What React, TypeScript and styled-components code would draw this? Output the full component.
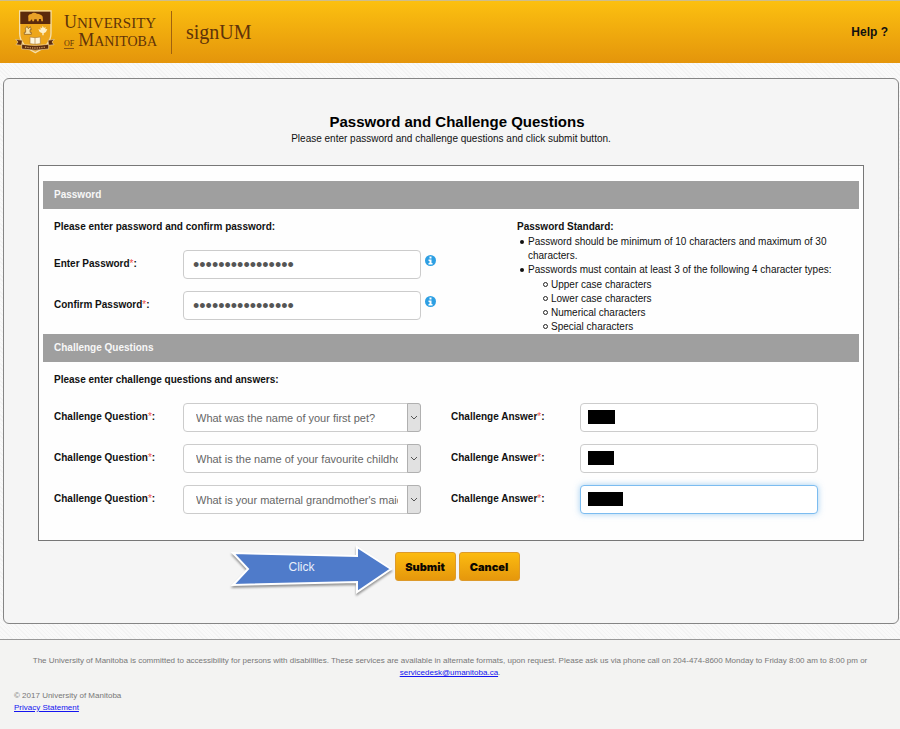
import React from "react";
import styled, { createGlobalStyle } from "styled-components";

const GlobalStyle = createGlobalStyle`
  *, *::before, *::after { box-sizing: border-box; }
  html { height: 100%; background: #f3f3f2; }
  body {
    margin: 0;
    font-family: "Liberation Sans", Arial, sans-serif;
    font-size: 10px;
    line-height: 14px;
    color: #111;
  }
  #root { min-height: 100vh; }
`;

const Page = styled.div`
  display: flex;
  flex-direction: column;
  min-height: 100vh;
  background: #f7f7f7 repeating-linear-gradient(45deg, #f3f3f3 0 1px, #f9f9f9 1px 3px);
`;

const Header = styled.header`
  display: flex;
  align-items: center;
  height: 63px;
  padding: 0 12px 0 15px;
  border-top: 1px solid #cdbd8c;
  background: linear-gradient(#fcc010, #e4950b);
  color: #5f3309;
  font-family: "Liberation Serif", "Times New Roman", serif;
`;

const Brand = styled.div`
  display: flex;
  align-items: center;
  flex: 1;
`;

const Wordmark = styled.div`
  display: flex;
  flex-direction: column;
  margin-left: 9px;
  font-size: 15px;
  line-height: 17px;
  white-space: nowrap;
`;

const WordLine = styled.div`
  display: flex;
  align-items: baseline;
`;

const Initial = styled.span`
  font-size: 18px;
`;

const SmallWord = styled.span`
  font-size: 14px;
`;

const OfWord = styled.span`
  margin-right: 4px;
  border-bottom: 1px solid #8a5512;
  font-size: 8px;
  line-height: 8px;
`;

const AppName = styled.div`
  display: flex;
  align-items: center;
  height: 43px;
  margin-left: 14px;
  padding-left: 14px;
  border-left: 1px solid #a0620f;
  font-size: 20px;
`;

const HelpLink = styled.a`
  color: #111;
  font-family: "Liberation Sans", Arial, sans-serif;
  font-size: 12px;
  font-weight: bold;
  text-decoration: none;
`;

const Card = styled.main`
  flex: 1;
  margin: 15px 1px 15px 3px;
  padding: 33px 34px;
  border: 1px solid #858585;
  border-radius: 6px;
  background: #f5f5f5;
`;

const Title = styled.h1`
  margin: 0;
  padding-left: 12px;
  font-size: 15px;
  line-height: 20px;
  text-align: center;
  color: #000;
`;

const Subtitle = styled.p`
  margin: 0 0 19px;
  text-align: center;
`;

const FormBox = styled.div`
  padding: 15px 4px 26px;
  border: 1px solid #777;
  background: #fefefe;
`;

const SectionBar = styled.h2`
  margin: 0;
  padding: 0 11px;
  background: #9f9f9f;
  color: #f7f7f7;
  font-size: 10px;
  line-height: 28px;
`;

const Prompt = styled.p`
  margin: 0 0 16px;
  font-weight: bold;
`;

const PasswordSection = styled.div`
  display: grid;
  grid-template-columns: 463fr 342fr;
  padding: 11px 0 0 11px;
`;

const Rows = styled.div`
  display: flex;
  flex-direction: column;
  gap: 12px;
`;

const PasswordRow = styled.div`
  display: grid;
  grid-template-columns: 129fr 238fr 96fr;
  align-items: center;
`;

const ChallengeSection = styled.div`
  padding: 11px 0 0 11px;
`;

const ChallengeRow = styled.div`
  display: grid;
  grid-template-columns: 129fr 238fr 30fr 129fr 238fr 41fr;
  align-items: center;
`;

const Label = styled.label<{ $column?: number }>`
  grid-column: ${(p) => p.$column ?? 1};
  padding-bottom: 2px;
  font-weight: bold;
  white-space: nowrap;
`;

const Star = styled.span`
  color: #f0504a;
  font-weight: normal;
`;

const TextBox = styled.input`
  display: block;
  width: 100%;
  min-width: 0;
  height: 29px;
  padding: 0 9px;
  border: 1px solid #ccc;
  border-radius: 4px;
  background: #fff;
  color: #555;
  font-family: "Liberation Sans", Arial, sans-serif;
  font-size: 12px;
  outline: none;
`;

const PasswordBox = styled(TextBox)`
  padding-top: 2px;
  font-size: 18px;
`;

const AnswerBox = styled(TextBox)<{ $active?: boolean }>`
  border-color: ${(p) => (p.$active ? "#7cbcf0" : "#ccc")};
  box-shadow: ${(p) => (p.$active ? "0 0 6px rgba(102, 175, 233, 0.6)" : "none")};
`;

const AnswerCell = styled.div`
  position: relative;
  grid-column: 5;
`;

const Redaction = styled.span<{ $width: number }>`
  position: absolute;
  top: 7px;
  left: 8px;
  width: ${(p) => p.$width}px;
  height: 14px;
  background: #000;
`;

const SelectBox = styled.div`
  display: grid;
  position: relative;
`;

const Select = styled.select`
  width: 100%;
  min-width: 0;
  height: 29px;
  padding: 0 22px 0 12px;
  border: 1px solid #ccc;
  border-radius: 4px;
  background: #fff;
  color: #666;
  font-family: "Liberation Sans", Arial, sans-serif;
  font-size: 11px;
  appearance: none;
`;

const SelectArrow = styled.span`
  position: absolute;
  top: 0;
  right: 0;
  bottom: 0;
  display: flex;
  align-items: center;
  justify-content: center;
  width: 14px;
  border: 1px solid #b0b0b0;
  border-radius: 0 3px 3px 0;
  background: #e1e1e1;
  pointer-events: none;
`;

const InfoButton = styled.button`
  align-self: start;
  justify-self: start;
  display: flex;
  margin: 5px 0 0 4px;
  padding: 0;
  border: 0;
  background: none;
`;

const StandardTitle = styled.div`
  margin-bottom: 1px;
  font-weight: bold;
`;

const BulletList = styled.ul`
  margin: 0;
  padding-left: 11px;
  list-style: none;

  > li::before {
    content: "";
    display: inline-block;
    width: 4px;
    height: 4px;
    margin: 0 4px 1px -8px;
    border-radius: 50%;
    background: #111;
    vertical-align: middle;
  }
`;

const CircleList = styled(BulletList)`
  margin-top: 1px;
  padding-left: 23px;

  > li::before {
    width: 5px;
    height: 5px;
    margin: 0 3px 1px -8px;
    border: 1px solid #222;
    background: none;
  }
`;

const Actions = styled.div`
  display: flex;
  justify-content: center;
  padding: 11px 0 0 12px;
`;

const ButtonGroup = styled.div`
  position: relative;
  display: flex;
  gap: 3px;
`;

const ActionButton = styled.button`
  width: 61px;
  height: 29px;
  padding: 0;
  border: 1px solid #dd9a2b;
  border-radius: 3px;
  background: linear-gradient(#fcbb10, #e5970c);
  color: #0c0700;
  font-family: Inter, "Liberation Sans", sans-serif;
  font-size: 11px;
  font-weight: 900;
`;

const Callout = styled.div`
  position: absolute;
  right: 100%;
  top: -8px;
  width: 167px;
  height: 52px;
`;

const CalloutArrow = styled.svg`
  filter: drop-shadow(0 2px 1px rgba(0, 0, 0, 0.4));
`;

const CalloutText = styled.span`
  position: absolute;
  top: 16px;
  left: 61px;
  color: #e9effb;
  font-size: 12px;
`;

const Footer = styled.footer`
  padding: 15px 14px 15px;
  border-top: 1px solid #999;
  background: #f3f3f2;
  color: #777;
  font-size: 8px;
  line-height: 12px;
`;

const FooterNote = styled.p`
  margin: 0 0 11px;
  text-align: center;
`;

const FooterLink = styled.a`
  color: #1414f0;
`;

function Crest() {
  return (
    <svg width="40" height="44" viewBox="0 0 120 132" aria-hidden="true">
      <path d="M14 3H108V70C108 100 86 116 61 128C36 116 14 100 14 70Z" fill="#eda61a" stroke="#f5dfac" strokeWidth="4" />
      <path d="M16 5H106V42H16Z" fill="#5b2a0c" />
      <path
        d="M40 34V24C38 17 42 12 49 12C53 7 61 7 66 11C74 12 81 14 83 20L84 34H79L78 27H72L71 34H66L65 28H58L57 34H52L51 28L47 31L46 34Z"
        fill="#e9a127"
      />
      <path d="M30 57l6-8 4 7 6-6 3 9h-4v8h4v6H28v-6h4v-8z" fill="#f9e2a4" stroke="#80511a" strokeWidth="2" />
      <path d="M83 47l4 7 5-3-1 7 6-1-4 9-7 4v6h-4v-6l-8-4-4-8 7 1-1-7 5 3z" fill="#fdf0c8" />
      <path d="M45 81l15 2 16-2v20l-16 2-15-2z" fill="#fff6dc" stroke="#b28139" strokeWidth="2" />
      <path d="M60 83V103" stroke="#b28139" strokeWidth="2" />
      <path d="M2 88L22 91 20 106 3 104 9 96ZM118 88L99 91 101 106 117 104 111 96Z" fill="#5b2a0c" stroke="#f1d295" strokeWidth="2" />
      <path d="M20 103Q61 110 101 103V117Q61 124 20 117Z" fill="#5b2a0c" stroke="#f1d295" strokeWidth="2" />
      <path d="M30 111Q61 117 92 111" fill="none" stroke="#c99a5c" strokeWidth="4" strokeDasharray="4 3" />
    </svg>
  );
}

function InfoIcon() {
  return (
    <svg width="11" height="11" viewBox="0 0 22 22" aria-hidden="true">
      <circle cx="11" cy="11" r="11" fill="#2d9fe3" />
      <path d="M9 3h4v4H9zM7 9h6v7h2v3H7v-3h2v-4H7z" fill="#fff" />
    </svg>
  );
}

function PasswordField({ id, label }: { id: string; label: string }) {
  return (
    <PasswordRow>
      <Label htmlFor={id}>{label}<Star>*</Star>:</Label>
      <PasswordBox id={id} type="password" defaultValue="abcdefgh12345678" />
      <InfoButton type="button" aria-label={`About ${label}`}><InfoIcon /></InfoButton>
    </PasswordRow>
  );
}

const challenges = [
  { question: "What was the name of your first pet?", width: 27 },
  { question: "What is the name of your favourite childhood friend?", width: 26 },
  { question: "What is your maternal grandmother's maiden name?", width: 35, active: true },
];

export default function App() {
  return (
    <>
      <GlobalStyle />
      <Page>
        <Header>
          <Brand>
            <Crest />
            <Wordmark>
              <WordLine><Initial>U</Initial>NIVERSITY</WordLine>
              <WordLine><OfWord>OF</OfWord><Initial>M</Initial><SmallWord>ANITOBA</SmallWord></WordLine>
            </Wordmark>
            <AppName>signUM</AppName>
          </Brand>
          <HelpLink href="#help">Help ?</HelpLink>
        </Header>

        <Card>
          <Title>Password and Challenge Questions</Title>
          <Subtitle>Please enter password and challenge questions and click submit button.</Subtitle>

          <FormBox>
            <SectionBar>Password</SectionBar>
            <PasswordSection>
              <div>
                <Prompt>Please enter password and confirm password:</Prompt>
                <Rows>
                  <PasswordField id="password" label="Enter Password" />
                  <PasswordField id="confirm" label="Confirm Password" />
                </Rows>
              </div>
              <div>
                <StandardTitle>Password Standard:</StandardTitle>
                <BulletList>
                  <li>Password should be minimum of 10 characters and maximum of 30<br />characters.</li>
                  <li>
                    Passwords must contain at least 3 of the following 4 character types:
                    <CircleList>
                      <li>Upper case characters</li>
                      <li>Lower case characters</li>
                      <li>Numerical characters</li>
                      <li>Special characters</li>
                    </CircleList>
                  </li>
                </BulletList>
              </div>
            </PasswordSection>

            <SectionBar>Challenge Questions</SectionBar>
            <ChallengeSection>
              <Prompt>Please enter challenge questions and answers:</Prompt>
              <Rows>
                {challenges.map((c, i) => (
                  <ChallengeRow key={c.question}>
                    <Label htmlFor={`question-${i}`}>Challenge Question<Star>*</Star>:</Label>
                    <SelectBox>
                      <Select id={`question-${i}`} defaultValue={c.question}>
                        <option>{c.question}</option>
                      </Select>
                      <SelectArrow>
                        <svg width="8" height="6" viewBox="0 0 8 6" aria-hidden="true">
                          <path d="M1 1l3 3 3-3" fill="none" stroke="#555" />
                        </svg>
                      </SelectArrow>
                    </SelectBox>
                    <Label $column={4} htmlFor={`answer-${i}`}>Challenge Answer<Star>*</Star>:</Label>
                    <AnswerCell>
                      <AnswerBox id={`answer-${i}`} type="text" $active={c.active} />
                      <Redaction $width={c.width} />
                    </AnswerCell>
                  </ChallengeRow>
                ))}
              </Rows>
            </ChallengeSection>
          </FormBox>

          <Actions>
            <ButtonGroup>
              <Callout>
                <CalloutArrow width="167" height="52" viewBox="228 544 167 52" aria-hidden="true">
                  <path
                    d="M233 553L357 556V547L391 569 357 592V582L233 585 248 569Z"
                    fill="#4f7bca"
                    stroke="#fff"
                    strokeWidth="2"
                  />
                </CalloutArrow>
                <CalloutText>Click</CalloutText>
              </Callout>
              <ActionButton type="submit">Submit</ActionButton>
              <ActionButton type="button">Cancel</ActionButton>
            </ButtonGroup>
          </Actions>
        </Card>

        <Footer>
          <FooterNote>
            The University of Manitoba is committed to accessibility for persons with disabilities. These services are
            available in alternate formats, upon request. Please ask us via phone call on 204-474-8600 Monday to Friday
            8:00 am to 8:00 pm or <FooterLink href="mailto:servicedesk@umanitoba.ca">servicedesk@umanitoba.ca</FooterLink>.
          </FooterNote>
          <div>© 2017 University of Manitoba</div>
          <FooterLink href="#privacy">Privacy Statement</FooterLink>
        </Footer>
      </Page>
    </>
  );
}
